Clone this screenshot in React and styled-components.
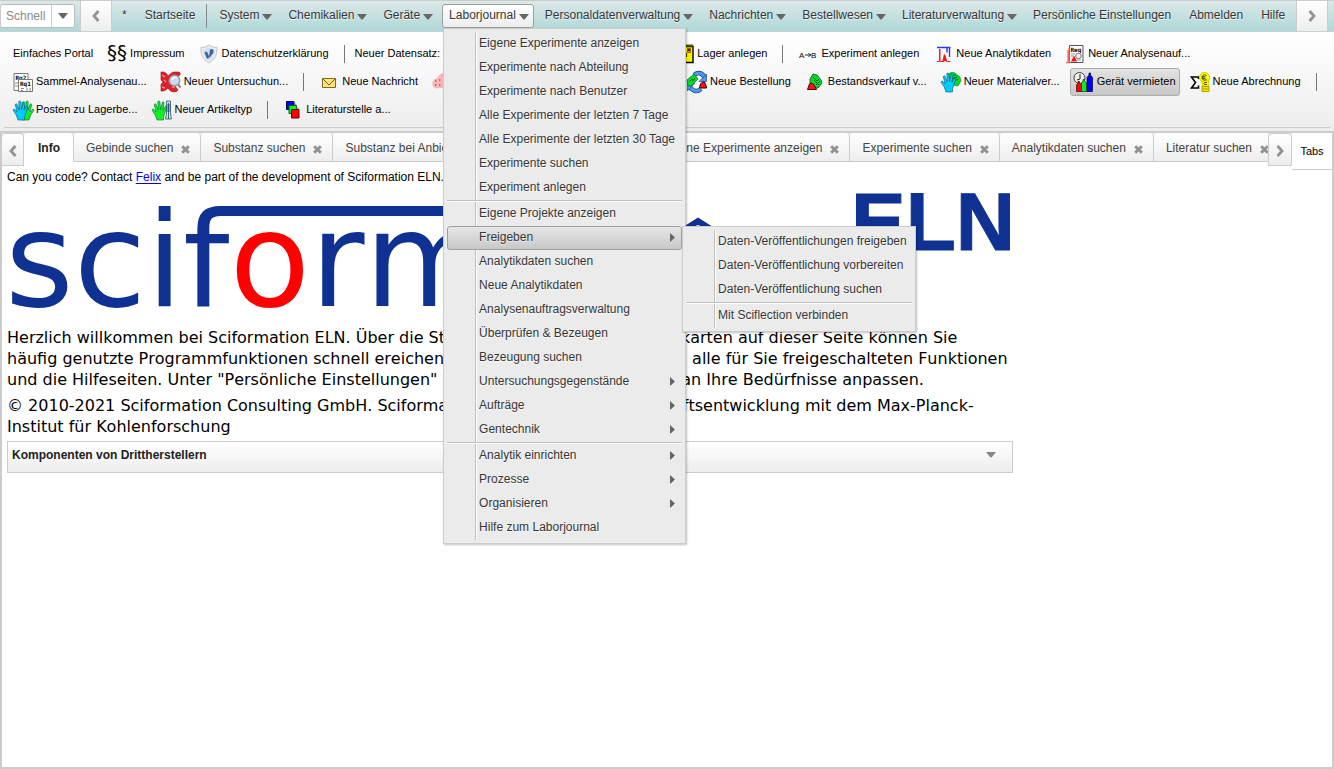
import React, { useState } from "react";
import styled, { createGlobalStyle, css } from "styled-components";

const GlobalStyle = createGlobalStyle`
  * {
    box-sizing: border-box;
  }
  body {
    margin: 0;
    background: #fff;
    color: #000;
    font-family: "Liberation Sans", Arial, Helvetica, sans-serif;
    font-size: 12px;
  }
  button, input {
    font: inherit;
    color: inherit;
  }
`;

const Page = styled.div`
  display: flex;
  flex-direction: column;
  min-height: 100vh;
`;

/* ---------- menu bar ---------- */

const MenuBar = styled.header`
  display: flex;
  align-items: stretch;
  height: 32px;
  padding-right: 6px;
  border-top: 1px solid #ccc;
  border-bottom: 1px solid #c4d4d4;
  background: linear-gradient(#dce8e8, #aed8d7);
  color: #363636;
`;
const QuickSearch = styled.div`
  display: flex;
  width: 75px;
  height: 24px;
  margin: 3px 5px 0 0;
  border: 1px solid #bbb;
  border-left-color: #ccc;
  border-radius: 3px;
  background: #fff;
  overflow: hidden;
`;
const QuickInput = styled.input`
  flex: 1;
  min-width: 0;
  padding: 0 0 0 5px;
  border: 0;
  outline: 0;
  background: none;
  &::placeholder {
    color: #8a8a8a;
    opacity: 1;
  }
`;
const QuickButton = styled.button`
  display: flex;
  align-items: center;
  justify-content: center;
  width: 23px;
  padding: 0;
  border: 0;
  border-left: 1px solid #ccc;
  background: #fff;
`;
const ScrollButton = styled.button`
  display: flex;
  align-items: center;
  justify-content: center;
  flex: none;
  padding: 0;
  border: 1px solid #ccc;
  background: linear-gradient(#fff, #ededed);
`;
const BarScroll = styled(ScrollButton)`
  width: 32px;
  border-width: 0 1px;
`;
const MenuList = styled.nav`
  display: flex;
  flex: 1;
  align-items: flex-start;
  padding: 3px 0 0 1px;
`;
const MenuEntry = styled.div`
  position: relative;
  margin: 0 2px;
`;
const MenuButton = styled.button`
  display: flex;
  align-items: center;
  gap: 3px;
  height: 24px;
  padding: 0 ${(p) => (p.$arrow ? 4 : 6)}px 2px 6px;
  border: 1px solid transparent;
  border-radius: 3px;
  background: none;
  white-space: nowrap;
  text-shadow: 0 1px 1px rgba(255, 255, 255, 0.75);
  ${(p) =>
    p.$open &&
    css`
      border-color: #9d9d9d;
      background: linear-gradient(#fff, #ededed);
    `}
  svg {
    margin-top: 4px;
  }
`;
const BarDivider = styled.span`
  width: 1px;
  height: 24px;
  margin: 0 3px 0 2px;
  background: #7f8c8c;
`;

/* ---------- drop down menus ---------- */

const Menu = styled.div`
  position: absolute;
  z-index: 10;
  left: ${(p) => (p.$sub ? "235px" : "1px")};
  top: ${(p) => (p.$sub ? "0" : "24px")};
  width: ${(p) => (p.$sub ? 234 : 243)}px;
  padding: 3px;
  border: 1px solid #ccc;
  background: linear-gradient(90deg, #ebebeb 31px, #bfbfbf 31px, #bfbfbf 32px, #fff 32px, #fff 33px, #ebebeb 33px)
    no-repeat 0 3px / 100% calc(100% - 6px) #ebebeb;
  box-shadow: 1px 1px 2px rgba(0, 0, 0, 0.25);
`;
const MenuRow = styled.div`
  position: relative;
`;
const MenuItem = styled.button`
  display: flex;
  align-items: center;
  justify-content: space-between;
  width: 100%;
  height: 24px;
  padding: 0 6px 2px 31px;
  border: 1px solid transparent;
  border-radius: 3px;
  background: none;
  text-align: left;
  white-space: nowrap;
  text-shadow: 0 1px 1px rgba(255, 255, 255, 0.75);
  svg {
    margin-top: 1px;
  }
  ${(p) =>
    p.$active &&
    css`
      border-color: #a0a0a0;
      background: linear-gradient(#e6e6e6, #c8c8c8);
    `}
`;
const MenuLine = styled.div`
  height: 2px;
  border-top: 1px solid #bfbfbf;
  border-bottom: 1px solid #fff;
`;

/* ---------- tool bar ---------- */

const ToolArea = styled.section`
  padding: 8px 0 3px 4px;
  background: linear-gradient(#fff, #ededed);
`;
const ToolRows = styled.div`
  border-bottom: 1px solid #ccc;
  padding: 0 0 3px 2px;
  margin-right: 4px;
`;
const ToolRow = styled.div`
  display: flex;
  align-items: center;
  height: 28px;
`;
const ToolButton = styled.button`
  display: flex;
  align-items: center;
  flex: none;
  gap: 3px;
  height: 28px;
  width: ${(p) => (p.$width ? p.$width + "px" : "auto")};
  margin: 0 3px;
  padding: 0 3px;
  border: 1px solid transparent;
  border-radius: 3px;
  background: none;
  white-space: nowrap;
  ${(p) =>
    p.$active &&
    css`
      border-color: #acacac;
      background: linear-gradient(#e2e2e2, #c8c8c8);
    `}
`;
const ToolText = styled.span`
  padding-bottom: 2px;
  font-size: 11px;
`;
const ToolLabel = styled(ToolText)`
  flex: none;
  margin: 0 4px 0 2px;
`;
const ToolDivider = styled.span`
  flex: none;
  width: 1px;
  height: 18px;
  margin: 0 8px;
  background: #777;
`;
const Icon = styled.svg`
  flex: none;
  width: 20px;
  height: 20px;
  overflow: visible;
`;

/* ---------- tabs and content ---------- */

const Frame = styled.main`
  flex: 1;
  border: 2px solid #ccc;
`;
const TabBar = styled.div`
  display: flex;
  align-items: flex-start;
  height: 29px;
  background: linear-gradient(#ededed, #ededed 28px, #ccc 28px);
`;
const TabScroll = styled(ScrollButton)`
  width: ${(p) => p.$width}px;
  height: 33px;
  padding-top: 3px;
  border-radius: 4px 4px 0 0;
  border-left-width: ${(p) => (p.$first ? 0 : 1)}px;
`;
const TabStrip = styled.div`
  display: flex;
  flex: 1;
  min-width: 0;
  overflow: hidden;
`;
const Tab = styled.div`
  display: flex;
  align-items: center;
  flex: none;
  gap: 8px;
  height: 29px;
  padding: 2px ${(p) => (p.$current ? 13 : 10)}px 0 ${(p) => (p.$current ? 14 : 12)}px;
  border: 1px solid #ccc;
  border-width: 0 1px 1px 0;
  border-radius: 4px 4px 0 0;
  background: linear-gradient(#fff, #ededed);
  color: #444;
  white-space: nowrap;
  ${(p) =>
    p.$current &&
    css`
      border-bottom-color: #fff;
      background: #fff;
      color: #222;
      font-weight: bold;
    `}
`;
const TabButton = styled.button`
  padding: 0;
  border: 0;
  background: none;
`;
const CloseButton = styled(TabButton)`
  display: flex;
  margin-top: 2px;
`;
const TabsBox = styled.button`
  flex: none;
  width: 40px;
  height: 37px;
  padding: 0 0 1px;
  border: 0;
  border-bottom: 1px solid #ccc;
  background: #fff;
  font-size: 11px;
`;
const Content = styled.div`
  max-width: 1016px;
  padding: 5px;
`;
const Note = styled.p`
  margin: 0;
  line-height: 20px;
  a {
    color: #00e;
    text-underline-offset: 2px;
  }
`;
const Logo = styled.svg`
  display: block;
  width: 1006px;
  height: 135px;
  overflow: visible;
  font-kerning: none;
`;
const Text = styled.p`
  margin: 5px 0 4px;
  padding-right: 2px;
  font-family: "DejaVu Sans", Verdana, sans-serif;
  font-size: 16px;
  line-height: 21px;
  font-kerning: none;
`;
const Section = styled.button`
  display: flex;
  justify-content: space-between;
  width: 100%;
  height: 32px;
  padding: 6px 16px 0 4px;
  border: 1px solid #ccc;
  background: linear-gradient(#fff, #ededed);
  color: #222;
  font-weight: bold;
  text-align: left;
  svg {
    margin-top: 4px;
  }
`;

const Caret = ({ color = "#666" }) => (
  <svg width="10" height="6" viewBox="0 0 10 6">
    <path d="M0 0h10L6 4.900Q5 5.900 4 4.900z" fill={color} />
  </svg>
);
const SideCaret = () => (
  <svg width="5" height="9" viewBox="0 0 5 9">
    <path d="M0 0l5 4.500L0 9z" fill="#666" />
  </svg>
);
const Chevron = ({ left }) => (
  <svg width="8" height="12" viewBox="0 0 8 12">
    <path
      d={left ? "M6.500 1L2 6l4.500 5" : "M1.500 1L6 6l-4.500 5"}
      fill="none"
      stroke="#929292"
      strokeWidth="2.800"
    />
  </svg>
);
const Cross = () => (
  <svg width="9" height="9" viewBox="0 0 9 9">
    <path d="M1.200 1.200l6.600 6.600M7.800 1.200L1.200 7.800" stroke="#929292" strokeWidth="3" />
  </svg>
);

const HAND =
  "M5 20Q4 15 0 10Q.500 8.500 2 9.500L4.200 12 2.200 4.500Q3 3 4 4.200L6.200 10 5.800 1.500Q6.800 .500 7.800 1.500L8.600 9.500 10.400 2Q11.500 1.500 12 2.600L11 10.500 13.600 6Q14.800 5.800 14.800 7L12.800 13Q11 17 11.500 20z";

const icons = {
  imprint: (
    <text x="0" y="15" fontSize="20" fontFamily="DejaVu Sans, sans-serif">
      §§
    </text>
  ),
  shield: (
    <>
      <path d="M10 1Q14 4 18 3.500 19 14 10 19 1 14 2 3.500 6 4 10 1z" fill="#ededee" stroke="#c3c6c9" />
      <path d="M10 3.500Q13 5.500 15.500 5.500 16 13 10 16.500 4 13 4.500 5.500 7 5.500 10 3.500z" fill="#d5dee8" />
      <path
        d="M5.500 8.500Q7 7 8.500 8.500L10 12.500Q9.500 16 7.500 14zM11 5.500Q14 4 14.500 6.500 15 9 12.500 11L10.500 14Q9 12.500 10.500 10z"
        fill="#3a66a8"
      />
    </>
  ),
  store: (
    <>
      <path d="M1 2.500h18v16H1z" fill="#fff200" stroke="#000" strokeWidth="1.400" />
      <path d="M1 1.500h18" stroke="#5c5800" strokeWidth="2" />
      <path d="M13.500 4.500h3v4h-3z" fill="#e8a000" stroke="#830" strokeWidth=".700" />
      <path d="M12 9v4M14 6h2" stroke="#000" strokeWidth="1.400" />
    </>
  ),
  reaction: (
    <>
      <text x="1" y="14" fontSize="8" fontFamily="Liberation Sans, sans-serif">
        A
      </text>
      <path d="M7 11h6M10.500 9l2 2-2 2" fill="none" stroke="#222" />
      <text x="13" y="14" fontSize="8" fontFamily="Liberation Sans, sans-serif">
        B
      </text>
    </>
  ),
  spectrum: (
    <>
      <path d="M4 3.500h13.500M14 3.500v5M16.500 4v9" stroke="#33f" fill="none" strokeWidth="1.400" />
      <path d="M4 17.500h2.500V5M7 5v12.500h4l1-6 1.500 6H17.500" stroke="#e22" fill="none" />
      <path d="M9.500 17l1.500-7h.5l2.500 7z" fill="#f11" />
    </>
  ),
  request: (
    <>
      <path d="M4.500 1.500h13.500v17H4.500z" fill="#fff" stroke="#555" />
      <path d="M1 18.500h4M3 18V6l1 12M4 18V4" stroke="#f66" fill="none" strokeWidth="1.300" />
      <text x="5.500" y="8" fontSize="6" fontWeight="bold" fontFamily="DejaVu Sans Mono, monospace">
        Req
      </text>
      <path d="M6 10h4M6 12h3M12 16h4" stroke="#999" />
      <circle cx="13.500" cy="12" r="2.800" fill="#eee" stroke="#777" />
      <path d="M6 17.500l3-6 3 6z" fill="#f11" />
    </>
  ),
  requests: (
    <>
      <path d="M1 1.500h14v17H1z" fill="#fff" stroke="#777" />
      <text x="2.500" y="8" fontSize="6" fontWeight="bold" fontFamily="DejaVu Sans Mono, monospace">
        Rq2
      </text>
      <path d="M5.500 7.500h14v12h-14z" fill="#fff" stroke="#777" />
      <text x="7" y="14" fontSize="6" fontWeight="bold" fontFamily="DejaVu Sans Mono, monospace">
        Rq1
      </text>
      <path d="M2 11h3M2 14h3M8 16.500h3M8 18.500h2M14 16v3M17 16v3" stroke="#888" />
    </>
  ),
  examine: (
    <>
      <g fill="#d8232a" stroke="#a11" strokeWidth=".600">
        <path d="M0 0h3q3 1 4 4 4-4 6-4h5q2 1 1 3l-8 4-4 2q1 2 2 3l5 2 3 4q-1 2-4 2-4 0-6-4-3 4-7 3V12q2-1 2-2-1-1-2-2z" />
      </g>
      <path d="M1 3l3 2M1 15l3 1M11 15h3M3 8l2 2" stroke="#f88" strokeWidth="1.500" />
      <circle cx="13.500" cy="8.500" r="5.200" fill="#ccd9f2" stroke="#999" strokeWidth="1.400" />
      <path d="M11 8q2-4 5-2" stroke="#fff" fill="none" strokeWidth="1.500" />
      <path d="M17 12.500l2.500 3" stroke="#888" strokeWidth="2" />
    </>
  ),
  mail: (
    <>
      <path d="M3.500 6.500h13v9h-13z" fill="#ffe27a" stroke="#7e6a24" />
      <path d="M4 7l6 6 6-6" fill="none" stroke="#6e5a14" />
    </>
  ),
  pig: (
    <>
      <path
        d="M1 10Q2 7 6 6Q8 1 13 2 19 3 18 9 17 14 12 15l-8 1Q0 15 1 10z"
        fill="#ffb5b5"
        stroke="#e9a0a0"
        strokeWidth=".600"
      />
      <path d="M3 9h1.500M7 8h1.500M3 13h1.500M7 13h1.500" stroke="#a55" strokeWidth="1.500" />
    </>
  ),
  order: (
    <>
      <path d="M7 3Q14-2 18 6M14 17Q8 22 3 15" fill="none" stroke="#1a3c6c" strokeWidth="4.500" />
      <path d="M7 3Q14-2 18 6M14 17Q8 22 3 15" fill="none" stroke="#4b9aee" strokeWidth="3.200" />
      <path d="M19.500 2v7.500h-7.500zM.500 19v-7.500h7z" fill="#4b9aee" stroke="#1a3c6c" strokeWidth=".600" />
      <path d="M0 8l7-6 4 5-7 7-3 0z" fill="#0d2" stroke="#063" strokeWidth=".700" />
      <path d="M3 9l2-2 1 2 2-3" stroke="#062" fill="none" />
      <path d="M12.500 16l1-4 2-2h2l2 5v1z" fill="#f11" stroke="#300" />
    </>
  ),
  stock: (
    <>
      <path d="M5 7l3-5 4 1 4 5 1 3-4 5-8 0z" fill="#0d2" stroke="#052" strokeWidth=".800" />
      <path d="M8 5l4 4 2-2M11 13l4-4M9 8l5 5" stroke="#052" fill="none" />
      <path d="M2.500 17.500l2-5.500q2-2 4 0l3 5.500z" fill="#f11" stroke="#500" />
    </>
  ),
  material: (
    <>
      <path d="M7 3Q9-1 14 1l5 4 1 4-3 5-6-1z" fill="#0d2" stroke="#063" strokeWidth=".500" />
      <path d="M10 4l5-1M10 7l6-2M12 10l5-3" stroke="#063" />
      <path d={HAND} fill="#0cf" stroke="#057" strokeWidth=".600" />
    </>
  ),
  device: (
    <>
      <circle cx="5.500" cy="6" r="5.500" fill="#eee" stroke="#444" />
      <path d="M6 2v5l-3 1" fill="none" stroke="#222" />
      <path d="M2.500 19.500V13L4 11V9.500h1.500V11L7.500 13v6.500z" fill="#f00" stroke="#400" strokeWidth=".700" />
      <path d="M7.500 19.500V11L9 9V7.500h1.500V9l2 2v8.500z" fill="#0e2" stroke="#040" strokeWidth=".700" />
      <path d="M13 19.500V5.500L15 3V1h1.500v2l2 2.500v14z" fill="#00f" stroke="#004" strokeWidth=".700" />
    </>
  ),
  billing: (
    <>
      <path d="M8.500 7V5H1.500l4 5.500-4 5.500h7v-2.500" fill="none" stroke="#000" strokeWidth="1.600" />
      <circle cx="14.500" cy="5.500" r="5" fill="#ff0" stroke="#cc0" />
      <circle cx="15.500" cy="11.500" r="3.500" fill="#ff0" stroke="#cc0" />
      <path d="M12 14.500h7v5h-7z" fill="#f5e400" stroke="#b3a400" />
      <path d="M12 17h7" stroke="#b3a400" />
      <path d="M16.500 3.500q-4-2-4 2t4 2M11.500 4.800h4M11.500 6.300h4M17 10.500q-3-1-3 1t3 1" fill="none" stroke="#443" />
    </>
  ),
  hands: (
    <>
      <g transform="translate(21 0) scale(-1 1)">
        <path d={HAND} fill="#1e2" stroke="#064" strokeWidth=".600" />
      </g>
      <path d={HAND} fill="#0cf" stroke="#057" strokeWidth=".600" />
    </>
  ),
  article: (
    <>
      <path d={HAND} fill="#1e2" stroke="#064" strokeWidth=".600" />
      <path d="M14.500 1h4v12l1 6h-6l1-6z" fill="#bfe4e8" stroke="#356" strokeWidth=".800" />
      <path d="M16.500 3v16M14.500 5h4M14.500 7h4M14.500 9h4M14.500 11h4" stroke="#246" strokeWidth=".800" />
    </>
  ),
  literature: (
    <>
      <path d="M3.500 1.500h7.500v8H3.500z" fill="#00f" stroke="#006" />
      <path d="M6 5.500h7.500v8H6z" fill="#0f0" stroke="#060" />
      <path d="M8.500 9.500h7.500v8.500h-7.500z" fill="red" stroke="#600" />
      <path d="M11 2.500l2.500 3M13.500 7l2.500 2.500" stroke="#777" />
    </>
  ),
};

const toolRows = [
  [
    { label: "Einfaches Portal" },
    { label: "Impressum", icon: "imprint" },
    { label: "Datenschutzerklärung", icon: "shield" },
    "|",
    { text: "Neuer Datensatz:" },
    { label: "Neue Substanz", icon: "spectrum", width: 107 },
    { label: "Neues Gebinde", icon: "store", width: 104 },
    { label: "Lager anlegen", icon: "store" },
    "|",
    { label: "Experiment anlegen", icon: "reaction" },
    { label: "Neue Analytikdaten", icon: "spectrum" },
    { label: "Neuer Analysenauf...", icon: "request" },
  ],
  [
    { label: "Sammel-Analysenau...", icon: "requests" },
    { label: "Neuer Untersuchun...", icon: "examine" },
    "|",
    { label: "Neue Nachricht", icon: "mail" },
    { label: "Neues Konto", icon: "pig", width: 110 },
    { label: "Neue Rechnung", icon: "billing", width: 133 },
    { label: "Neue Bestellung", icon: "order" },
    { label: "Bestandsverkauf v...", icon: "stock" },
    { label: "Neuer Materialver...", icon: "material" },
    { label: "Gerät vermieten", icon: "device", active: true },
    { label: "Neue Abrechnung", icon: "billing" },
    "|",
  ],
  [
    { label: "Posten zu Lagerbe...", icon: "hands" },
    { label: "Neuer Artikeltyp", icon: "article" },
    "|",
    { label: "Literaturstelle a...", icon: "literature" },
  ],
];

const shareMenu = [
  { label: "Daten-Veröffentlichungen freigeben" },
  { label: "Daten-Veröffentlichung vorbereiten" },
  { label: "Daten-Veröffentlichung suchen" },
  "-",
  { label: "Mit Sciflection verbinden" },
];

const journalMenu = [
  { label: "Eigene Experimente anzeigen" },
  { label: "Experimente nach Abteilung" },
  { label: "Experimente nach Benutzer" },
  { label: "Alle Experimente der letzten 7 Tage" },
  { label: "Alle Experimente der letzten 30 Tage" },
  { label: "Experimente suchen" },
  { label: "Experiment anlegen" },
  "-",
  { label: "Eigene Projekte anzeigen" },
  { label: "Freigeben", more: true, items: shareMenu },
  { label: "Analytikdaten suchen" },
  { label: "Neue Analytikdaten" },
  { label: "Analysenauftragsverwaltung" },
  { label: "Überprüfen & Bezeugen" },
  { label: "Bezeugung suchen" },
  { label: "Untersuchungsgegenstände", more: true },
  { label: "Aufträge", more: true },
  { label: "Gentechnik", more: true },
  "-",
  { label: "Analytik einrichten", more: true },
  { label: "Prozesse", more: true },
  { label: "Organisieren", more: true },
  { label: "Hilfe zum Laborjournal" },
];

const barItems = [
  { label: "*" },
  { label: "Startseite" },
  "|",
  { label: "System", arrow: true },
  { label: "Chemikalien", arrow: true },
  { label: "Geräte", arrow: true },
  { label: "Laborjournal", arrow: true, items: journalMenu },
  { label: "Personaldatenverwaltung", arrow: true },
  { label: "Nachrichten", arrow: true },
  { label: "Bestellwesen", arrow: true },
  { label: "Literaturverwaltung", arrow: true },
  { label: "Persönliche Einstellungen" },
  { label: "Abmelden" },
  { label: "Hilfe" },
];

const tabs = [
  "Gebinde suchen",
  "Substanz suchen",
  "Substanz bei Anbietern suchen",
  "Substanzliste",
  "Eigene Experimente anzeigen",
  "Experimente suchen",
  "Analytikdaten suchen",
  "Literatur suchen",
];

const DropDown = ({ items, sub }) => (
  <Menu $sub={sub}>
    {items.map((item, i) =>
      item === "-" ? (
        <MenuLine key={i} />
      ) : (
        <MenuRow key={i}>
          <MenuItem type="button" $active={!!item.items}>
            {item.label}
            {item.more && <SideCaret />}
          </MenuItem>
          {item.items && <DropDown items={item.items} sub />}
        </MenuRow>
      )
    )}
  </Menu>
);

const App = () => {
  const [open, setOpen] = useState("Laborjournal");
  const toggle = (label) => setOpen(open === label ? "" : label);

  return (
    <Page>
      <GlobalStyle />
      <MenuBar>
        <QuickSearch>
          <QuickInput type="text" placeholder="Schnell" aria-label="Schnellsuche" />
          <QuickButton type="button" aria-label="Auswahl">
            <Caret />
          </QuickButton>
        </QuickSearch>
        <BarScroll type="button" aria-label="Zurück">
          <Chevron left />
        </BarScroll>
        <MenuList>
          {barItems.map((item, i) =>
            item === "|" ? (
              <BarDivider key={i} />
            ) : (
              <MenuEntry key={i}>
                <MenuButton
                  type="button"
                  $arrow={item.arrow}
                  $open={open === item.label}
                  onClick={() => toggle(item.label)}
                >
                  {item.label}
                  {item.arrow && <Caret />}
                </MenuButton>
                {item.items && open === item.label && <DropDown items={item.items} />}
              </MenuEntry>
            )
          )}
        </MenuList>
        <BarScroll type="button" aria-label="Weiter">
          <Chevron />
        </BarScroll>
      </MenuBar>

      <ToolArea>
        <ToolRows>
          {toolRows.map((row, r) => (
            <ToolRow key={r}>
              {row.map((tool, i) => {
                if (tool === "|") return <ToolDivider key={i} />;
                if (tool.text) return <ToolLabel key={i}>{tool.text}</ToolLabel>;
                return (
                  <ToolButton type="button" key={i} $active={tool.active} $width={tool.width}>
                    {tool.icon && <Icon viewBox="0 0 20 20">{icons[tool.icon]}</Icon>}
                    <ToolText>{tool.label}</ToolText>
                  </ToolButton>
                );
              })}
            </ToolRow>
          ))}
        </ToolRows>
      </ToolArea>

      <Frame>
        <TabBar>
          <TabScroll type="button" aria-label="Tabs zurück" $width={22} $first>
            <Chevron left />
          </TabScroll>
          <TabStrip>
            <Tab $current>
              <TabButton type="button">Info</TabButton>
            </Tab>
            {tabs.map((tab) => (
              <Tab key={tab}>
                <TabButton type="button">{tab}</TabButton>
                <CloseButton type="button" aria-label={tab + " schließen"}>
                  <Cross />
                </CloseButton>
              </Tab>
            ))}
          </TabStrip>
          <TabScroll type="button" aria-label="Tabs weiter" $width={24}>
            <Chevron />
          </TabScroll>
          <TabsBox type="button">Tabs</TabsBox>
        </TabBar>

        <Content>
          <Note>
            Can you code? Contact <a href="#felix">Felix</a> and be part of the development of Sciformation ELN.
          </Note>
          <Logo viewBox="0 0 1006 135" role="img" aria-label="sciformation ELN">
            <text x="-2" y="119" fontSize="132" fontFamily="DejaVu Sans, sans-serif" fill="#0e3192">
              scif<tspan fill="red">o</tspan>rm
            </text>
            <path d="M212 19H660v10H212z" fill="#0e3192" />
            <path d="M676 40L691 30.500 706 40v4l-15-6-15 6z" fill="#0e3192" />
            <text
              x="844"
              y="63"
              fontSize="82"
              fontWeight="bold"
              fontFamily="Liberation Sans, sans-serif"
              fill="#0e3192"
              stroke="#0e3192"
            >
              ELN
            </text>
          </Logo>
          <Text>
            Herzlich willkommen bei Sciformation ELN. Über die Startseite sowie über die Karteikarten auf dieser
            Seite können Sie häufig genutzte Programmfunktionen schnell ereichen. Im Menü oben sehen Sie nun alle
            für Sie freigeschalteten Funktionen und die Hilfeseiten. Unter "Persönliche Einstellungen" können Sie
            dieses Programm an Ihre Bedürfnisse anpassen.
          </Text>
          <Text>
            © 2010-2021 Sciformation Consulting GmbH. Sciformation ELN ist eine Gemeinschaftsentwicklung mit dem
            Max-Planck-Institut für Kohlenforschung
          </Text>
          <Section type="button">
            Komponenten von Drittherstellern
            <Caret color="#888" />
          </Section>
        </Content>
      </Frame>
    </Page>
  );
};

export default App;
